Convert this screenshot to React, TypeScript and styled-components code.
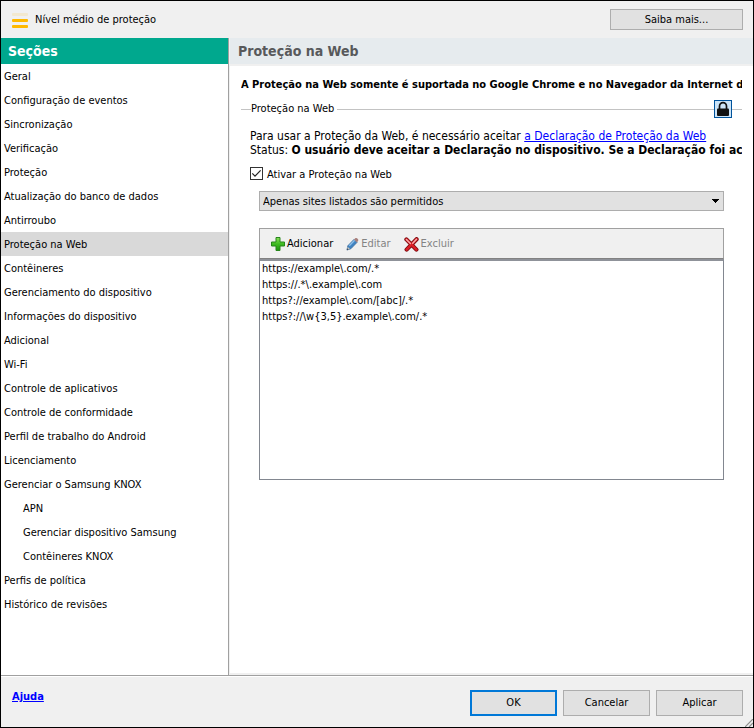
import React, { useState } from "react";
import styled, { createGlobalStyle, css } from "styled-components";

const GlobalStyle = createGlobalStyle`
  *, *::before, *::after { box-sizing: border-box; }
  body { margin: 0; background: #fff; }
  body, button, input, select {
    font-family: "DejaVu Sans Condensed", Tahoma, sans-serif;
    font-size: 11px;
    line-height: 14px;
    color: #000;
  }
`;

const Window = styled.div`
  display: flex;
  flex-direction: column;
  min-height: 100vh;
  border: 1px solid #000;
  background: #f0f0f0;
`;

const TopBar = styled.header`
  display: flex;
  align-items: center;
  justify-content: space-between;
  height: 37px;
  padding: 0 10px 0 11px;
`;

const Level = styled.div`
  display: flex;
  align-items: center;
  gap: 7px;
`;

const PushButton = styled.button<{ $primary?: boolean; $wide?: boolean }>`
  width: ${(p) => (p.$wide ? 133 : 87)}px;
  height: ${(p) => (p.$wide ? 21 : 26)}px;
  padding: 0;
  background: #e1e1e1;
  border: ${(p) => (p.$primary ? "2px solid #0078d7" : "1px solid #adadad")};
`;

const Body = styled.div`
  display: grid;
  grid-template-columns: 228px minmax(0, 1fr);
  column-gap: 1px;
  flex: 1;
`;

const Sidebar = styled.nav`
  background: #fff;
  border-right: 1px solid #a0a0a0;
`;

const SidebarTitle = styled.h2`
  margin: 0;
  padding: 0 7px;
  background: #00a88e;
  color: #fff;
  font-size: 14px;
  line-height: 26px;
`;

const SectionList = styled.ul`
  margin: 0;
  padding: 0;
  list-style: none;
`;

const SectionButton = styled.button<{ $nested?: boolean; $active?: boolean }>`
  display: block;
  width: 100%;
  height: 24px;
  padding: 2px 3px 0 ${(p) => (p.$nested ? 22 : 3)}px;
  border: 0;
  text-align: left;
  background: ${(p) => (p.$active ? "#d9d9d9" : "transparent")};
`;

const Content = styled.main`
  display: flex;
  flex-direction: column;
  background: #fff;
  border-bottom: 2px solid #f0f0f0;
`;

const ContentTitle = styled.h1`
  margin: 0;
  padding: 0 8px;
  background: #e6ebee;
  border-bottom: 2px solid #f0f0f0;
  color: #58595b;
  font-size: 14px;
  line-height: 26px;
`;

const Panel = styled.div`
  padding: 12px 11px 0;
`;

const Clipped = styled.p`
  margin: 0;
  overflow: hidden;
  white-space: nowrap;
`;

const Warning = styled(Clipped)`
  font-weight: bold;
`;

const Group = styled.section`
  margin-top: 8px;
`;

const GroupHeader = styled.div`
  display: flex;
  align-items: center;
`;

const Rule = styled.span<{ $short?: boolean }>`
  height: 1px;
  background: #c3c3c3;
  ${(p) => (p.$short ? css`flex: 0 0 10px;` : css`flex: 1;`)}
`;

const GroupTitle = styled.h3`
  margin: 0 3px 0 0;
  font-size: 11px;
  font-weight: normal;
`;

const LockButton = styled.button`
  display: flex;
  align-items: center;
  justify-content: center;
  width: 18px;
  height: 18px;
  padding: 0;
  border: 1px solid #00539c;
  background: #cce4f7;
`;

const GroupBody = styled.div`
  padding: 11px 0 0 9px;
`;

const Statement = styled(Clipped)`
  font-size: 12px;
  line-height: 14px;
`;

const Link = styled.a`
  color: #0000ff;
  text-decoration: underline;
`;

const CheckLabel = styled.label`
  display: flex;
  align-items: flex-start;
  gap: 4px;
  margin-top: 10px;
  line-height: 16px;
`;

const CheckBox = styled.span`
  display: grid;
  width: 13px;
  height: 13px;

  > * { grid-area: 1 / 1; }
  > svg { pointer-events: none; visibility: hidden; }
  > input:checked + svg { visibility: visible; }
`;

const CheckInput = styled.input`
  appearance: none;
  width: 13px;
  height: 13px;
  margin: 0;
  border: 1px solid #333;
  background: #fff;
`;

const Rules = styled.div`
  padding: 8px 18px 0 9px;
`;

const SelectWrap = styled.div`
  display: grid;
  align-items: center;

  > * { grid-area: 1 / 1; }
  > svg { justify-self: end; margin-right: 5px; pointer-events: none; }
`;

const Select = styled.select`
  appearance: none;
  width: 100%;
  height: 20px;
  padding: 2px 20px 0 3px;
  border: 1px solid #adadad;
  border-radius: 0;
  background: #e1e1e1;
`;

const Toolbar = styled.div`
  display: flex;
  align-items: center;
  gap: 13px;
  height: 31px;
  margin-top: 17px;
  padding: 1px 11px 0;
  border: 1px solid #a0a0a0;
  border-bottom-color: #828282;
  background: #f0f0f0;
`;

const ToolButton = styled.button`
  display: flex;
  align-items: center;
  gap: 2px;
  padding: 0;
  border: 0;
  background: none;

  &:disabled { color: #838383; }
`;

const AddressList = styled.ul`
  min-height: 221px;
  margin: 0;
  padding: 0 2px;
  list-style: none;
  border: 1px solid #828790;
  border-top: 2px solid #8f9299;
  line-height: 16px;
`;

const Footer = styled.footer`
  display: flex;
  justify-content: space-between;
  align-items: flex-start;
  min-height: 52px;
  padding: 14px 10px 10px 11px;
  border-top: 1px solid #a0a0a0;
  box-shadow: inset 0 1px #fff;
`;

const HelpLink = styled(Link)`
  font-weight: bold;
`;

const FooterActions = styled.div`
  display: flex;
  gap: 6px;
`;

const Grip = styled.svg`
  position: absolute;
  right: 1px;
  bottom: 1px;
`;

const Shell = styled.div`
  position: relative;
`;

const LevelIcon = () => (
  <svg width="16" height="16" viewBox="0 0 16 16" aria-hidden="true">
    <rect width="16" height="3" y="1" rx="1" fill="#f2e8cf" />
    <rect width="16" height="3" y="7" rx="1" fill="#ffb900" />
    <rect width="16" height="3" y="13" rx="1" fill="#ffb900" />
  </svg>
);

const LockIcon = () => (
  <svg width="14" height="16" viewBox="0 0 14 16" aria-hidden="true">
    <path d="M3.5 8V5.2a3.5 3.5 0 0 1 7 0V8" fill="none" stroke="#111" strokeWidth="1.7" />
    <rect x="1" y="7.4" width="12" height="7.6" rx="1" fill="#111" />
  </svg>
);

const PlusIcon = () => (
  <svg width="14" height="14" viewBox="0 0 14 14" aria-hidden="true">
    <defs>
      <linearGradient id="plus" x1="0" y1="0" x2="0" y2="1">
        <stop offset="0" stopColor="#8be05a" />
        <stop offset=".5" stopColor="#3fbb22" />
        <stop offset="1" stopColor="#1f9310" />
      </linearGradient>
    </defs>
    <path d="M5 .5h4V5h4.5v4H9v4.5H5V9H.5V5H5z" fill="url(#plus)" stroke="#26861b" strokeLinejoin="round" />
  </svg>
);

const PencilIcon = () => (
  <svg width="13" height="14" viewBox="0 0 13 14" aria-hidden="true">
    <path d="M1.8 8.8 8 2.4l3 3-6.2 6.4-3.8 1.2z" fill="#3f83c2" stroke="#3b6c9c" strokeWidth=".8" />
    <path d="M3.3 8.7 8.6 3.3" stroke="#8fc0ea" strokeWidth="1.3" />
    <path d="m8 2.4 1.5-1.3q.8-.5 1.6.2l.9.9q.7.8.1 1.6L11 5.4z" fill="#a87f7c" />
    <path d="m1.6 9.8 2.4 2.3-3 .9z" fill="#c9c4bb" />
    <path d="m1.3 11.3 1.3 1.3-1.9.6z" fill="#35475c" />
  </svg>
);

const CrossIcon = () => (
  <svg width="15" height="15" viewBox="0 0 15 15" aria-hidden="true">
    <path d="M2.4 2.4 12.4 12.6M12.6 2.2 2.6 12.6" stroke="#7d0c11" strokeWidth="4.2" strokeLinecap="round" />
    <path d="M2.4 2.4 12.4 12.6M12.6 2.2 2.6 12.6" stroke="#dc1f26" strokeWidth="2.4" strokeLinecap="round" />
    <path d="m2.4 2.4 4 4M12.5 2.3 8.7 6.3" stroke="#f5a8a8" strokeWidth="1.4" strokeLinecap="round" />
  </svg>
);

const CheckMark = () => (
  <svg width="13" height="13" viewBox="0 0 13 13" aria-hidden="true">
    <path d="m2.3 6.4 2.7 2.8 5.6-5.9" fill="none" stroke="#222" strokeWidth="1.2" />
  </svg>
);

const DownArrow = () => (
  <svg width="7" height="4" viewBox="0 0 7 4" shapeRendering="crispEdges" aria-hidden="true">
    <path d="M0 0h7v1H6v1H5v1H4v1H3V3H2V2H1V1H0z" />
  </svg>
);

const sections: { name: string; nested?: boolean }[] = [
  { name: "Geral" },
  { name: "Configuração de eventos" },
  { name: "Sincronização" },
  { name: "Verificação" },
  { name: "Proteção" },
  { name: "Atualização do banco de dados" },
  { name: "Antirroubo" },
  { name: "Proteção na Web" },
  { name: "Contêineres" },
  { name: "Gerenciamento do dispositivo" },
  { name: "Informações do dispositivo" },
  { name: "Adicional" },
  { name: "Wi-Fi" },
  { name: "Controle de aplicativos" },
  { name: "Controle de conformidade" },
  { name: "Perfil de trabalho do Android" },
  { name: "Licenciamento" },
  { name: "Gerenciar o Samsung KNOX" },
  { name: "APN", nested: true },
  { name: "Gerenciar dispositivo Samsung", nested: true },
  { name: "Contêineres KNOX", nested: true },
  { name: "Perfis de política" },
  { name: "Histórico de revisões" },
];

const addresses = [
  "https://example\\.com/.*",
  "https://.*\\.example\\.com",
  "https?://example\\.com/[abc]/.*",
  "https?://\\w{3,5}.example\\.com/.*",
];

export default function App() {
  const [active, setActive] = useState("Proteção na Web");
  const [enabled, setEnabled] = useState(true);

  return (
    <Shell>
      <GlobalStyle />
      <Window>
        <TopBar>
          <Level>
            <LevelIcon />
            Nível médio de proteção
          </Level>
          <PushButton type="button" $wide>Saiba mais...</PushButton>
        </TopBar>
        <Body>
          <Sidebar aria-label="Seções">
            <SidebarTitle>Seções</SidebarTitle>
            <SectionList>
              {sections.map(({ name, nested }) => (
                <li key={name}>
                  <SectionButton
                    type="button"
                    $nested={nested}
                    $active={name === active}
                    onClick={() => setActive(name)}
                  >
                    {name}
                  </SectionButton>
                </li>
              ))}
            </SectionList>
          </Sidebar>
          <Content>
            <ContentTitle>Proteção na Web</ContentTitle>
            <Panel>
              <Warning>
                A Proteção na Web somente é suportada no Google Chrome e no Navegador da Internet d
              </Warning>
              <Group>
                <GroupHeader>
                  <Rule $short />
                  <GroupTitle>Proteção na Web</GroupTitle>
                  <Rule />
                  <LockButton type="button" aria-label="Bloquear">
                    <LockIcon />
                  </LockButton>
                  <Rule $short />
                </GroupHeader>
                <GroupBody>
                  <Statement>
                    Para usar a Proteção da Web, é necessário aceitar{" "}
                    <Link href="#declaracao">a Declaração de Proteção da Web</Link>
                  </Statement>
                  <Statement>
                    Status:{" "}
                    <b>O usuário deve aceitar a Declaração no dispositivo. Se a Declaração foi ace</b>
                  </Statement>
                  <CheckLabel>
                    <CheckBox>
                      <CheckInput
                        type="checkbox"
                        checked={enabled}
                        onChange={(e) => setEnabled(e.target.checked)}
                      />
                      <CheckMark />
                    </CheckBox>
                    Ativar a Proteção na Web
                  </CheckLabel>
                  <Rules>
                    <SelectWrap>
                      <Select aria-label="Modo de proteção">
                        <option>Apenas sites listados são permitidos</option>
                      </Select>
                      <DownArrow />
                    </SelectWrap>
                    <Toolbar role="toolbar">
                      <ToolButton type="button"><PlusIcon />Adicionar</ToolButton>
                      <ToolButton type="button" disabled><PencilIcon />Editar</ToolButton>
                      <ToolButton type="button" disabled><CrossIcon />Excluir</ToolButton>
                    </Toolbar>
                    <AddressList>
                      {addresses.map((a) => <li key={a}>{a}</li>)}
                    </AddressList>
                  </Rules>
                </GroupBody>
              </Group>
            </Panel>
          </Content>
        </Body>
        <Footer>
          <HelpLink href="#ajuda">Ajuda</HelpLink>
          <FooterActions>
            <PushButton type="button" $primary>OK</PushButton>
            <PushButton type="button">Cancelar</PushButton>
            <PushButton type="button">Aplicar</PushButton>
          </FooterActions>
        </Footer>
      </Window>
      <Grip width="8" height="8" viewBox="0 0 8 8" aria-hidden="true">
        <path d="M0 8 8 0M4 8l4-4" stroke="#8c8c8c" strokeWidth="1.2" />
      </Grip>
    </Shell>
  );
}
